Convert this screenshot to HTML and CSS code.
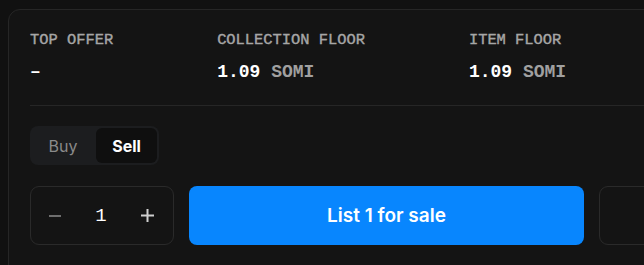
FILE: index.html
```html
<!DOCTYPE html>
<html lang="en">
<head>
<meta charset="utf-8">
<link rel="stylesheet" href="styles.css">
</head>
<body>
<div class="page">
  <section class="card">
    <div class="stats">
      <div class="stat">
        <div class="label">TOP OFFER</div>
        <div class="value">–</div>
      </div>
      <div class="stat">
        <div class="label">COLLECTION FLOOR</div>
        <div class="value">1.09 <span class="unit">SOMI</span></div>
      </div>
      <div class="stat">
        <div class="label">ITEM FLOOR</div>
        <div class="value">1.09 <span class="unit">SOMI</span></div>
      </div>
    </div>
    <div class="toggle">
      <button class="tab">Buy</button>
      <button class="tab active">Sell</button>
    </div>
    <div class="actions">
      <div class="qty">
        <svg class="minus" width="12" height="12" viewBox="0 0 12 12"><path d="M0 6h12" stroke="currentColor" stroke-width="2"/></svg>
        <span class="count">1</span>
        <svg class="plus" width="13" height="13" viewBox="0 0 13 13"><path d="M0 6.5h13M6.5 0v13" stroke="currentColor" stroke-width="2"/></svg>
      </div>
      <button class="list-btn">List 1 for sale</button>
      <div class="extra"></div>
    </div>
  </section>
</div>
</body>
</html>
```
FILE: styles.css
```css
html, body {
  margin: 0;
  padding: 0;
  background: #111111;
  overflow: hidden;
}
.page {
  padding: 9px 0 0 8px;
  width: 800px;
}
.card {
  width: 760px;
  height: 300px;
  background: #141414;
  border: 1px solid #262626;
  border-radius: 12px;
  padding: 0 0 0 21px;
  box-sizing: border-box;
}
.stats {
  display: flex;
  gap: 104px;
  padding: 20px 0 21px;
  border-bottom: 1px solid #262626;
}
.label {
  font-family: "Liberation Mono", monospace;
  font-size: 15.4px;
  line-height: 20px;
  color: #a6a6a6;
  -webkit-text-stroke: 0.4px currentColor;
}
.value {
  margin-top: 10px;
  font-family: "Liberation Mono", monospace;
  font-size: 18px;
  line-height: 24px;
  font-weight: 700;
  color: #ffffff;
}
.unit {
  color: #a0a0a0;
}
.toggle {
  display: inline-flex;
  margin-top: 20px;
  padding: 2px;
  height: 39px;
  box-sizing: border-box;
  background: #1c1d1f;
  border-radius: 8px;
}
.tab {
  border: 0;
  background: transparent;
  font-family: Inter, sans-serif;
  font-size: 16px;
  color: #8a8a8a;
  width: 64px;
  padding: 0 2px 0 0;
  border-radius: 6px;
}
.tab.active {
  background: #0f0f0f;
  color: #ffffff;
  font-weight: 700;
  width: 61px;
  padding: 0;
}
.actions {
  display: flex;
  gap: 15px;
  margin-top: 21px;
  height: 59px;
}
.qty {
  width: 144px;
  box-sizing: border-box;
  border: 1px solid #2a2a2a;
  border-radius: 9px;
  display: flex;
  align-items: center;
  justify-content: space-between;
  padding: 0 19px 0 18px;
}
.minus { color: #6e6e6e; }
.plus { color: #cfcfcf; }
.count {
  font-family: "Liberation Mono", monospace;
  font-size: 19px;
  color: #ffffff;
}
.list-btn {
  width: 395px;
  border: 0;
  border-radius: 8px;
  background: #0886fe;
  color: #ffffff;
  font-family: Inter, sans-serif;
  font-weight: 600;
  font-size: 19px;
}
.extra {
  width: 144px;
  box-sizing: border-box;
  border: 1px solid #2a2a2a;
  border-radius: 9px;
}
```
